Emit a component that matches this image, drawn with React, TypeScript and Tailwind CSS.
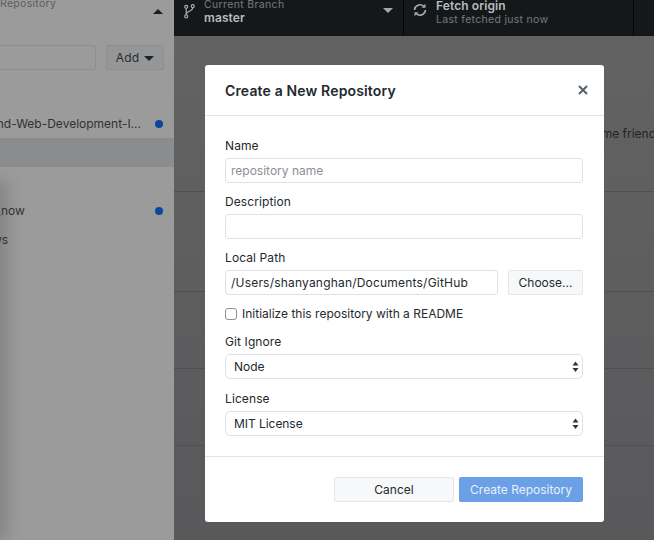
import React from "react";

const Chevron = ({ className }: { className?: string }) => (
  <svg width="10" height="5" viewBox="0 0 10 5" className={className}>
    <path d="M0 0h10L5 5z" fill="currentColor" />
  </svg>
);

const Field = ({ label, children, className = "" }: { label: string; children: React.ReactNode; className?: string }) => (
  <div className={className}>
    <div className="mb-[4px] h-[18px] pt-px text-[12px] leading-[17px] tracking-[0.1px] text-[#24292e]">{label}</div>
    {children}
  </div>
);

const SelectBox = ({ value }: { value: string }) => (
  <div className="relative h-[25px] w-full rounded-[5px] border border-[#dfe1e4] bg-white pl-[8px] text-[12px] leading-[23px] tracking-[-0.05px] text-[#24292e]">
    {value}
    <svg width="7" height="12" viewBox="0 0 7 12" className="absolute right-[3px] top-[6px] text-[#30353a]">
      <path d="M3.5 0.5L6.5 4.5H0.5z M3.5 11L0.5 7H6.5z" fill="currentColor" />
    </svg>
  </div>
);

export default function App() {
  return (
    <div className="relative flex h-[540px] w-[654px] overflow-hidden bg-[#5d5d5f] font-['Inter','Liberation_Sans',sans-serif]">
      <aside className="relative flex h-full w-[174px] shrink-0 flex-col overflow-hidden bg-[#9b9b9b] text-[#2f3133]">
        <div className="absolute -left-[16px] bottom-0 top-[180px] w-[24px] bg-[#858585] blur-[7px]" />
        <div className="flex h-[36px] items-start justify-between pr-[11px]">
          <span className="-mt-[3px] text-[10.5px] leading-[14px] tracking-[0.3px] text-[#5c5e60]">Repository</span>
          <Chevron className="mt-[9px] rotate-180 text-[#1d1f21]" />
        </div>
        <div className="mt-[9px] flex h-[25px] justify-between pr-[10px]">
          <div className="h-[25px] w-[96px] rounded-r-[3px] border border-l-0 border-[#8d8e8f] bg-[#9b9b9b]" />
          <div className="flex w-[58px] items-center justify-center gap-[5px] rounded-[2px] border border-[#8d8e8f] bg-[#959697] text-[12px] tracking-[0.1px] text-[#2a2c2e]">
            Add
            <Chevron className="mt-[1px] text-[#1f2123]" />
          </div>
        </div>
        <div className="mt-[40px] flex h-[28px] items-center justify-end overflow-hidden pr-[11px]">
          <span className="whitespace-nowrap text-[12px]">nd-Web-Development-I...</span>
          <span className="ml-[14px] size-[8px] shrink-0 rounded-full bg-[#0b479b]" />
        </div>
        <div className="h-[29px] bg-[#8b8c8d]" />
        <div className="relative mt-[30px] flex h-[28px] items-center justify-between pr-[11px]">
          <span className="-ml-[5px] text-[12px]">_now</span>
          <span className="size-[8px] rounded-full bg-[#0b479b]" />
        </div>
        <div className="relative -ml-[8px] h-[29px] text-[12px] leading-[29px]">ws</div>
      </aside>

      <main className="flex min-w-0 flex-1 flex-col bg-gradient-to-b from-[#636364] to-[#59595b]">
        <header className="flex h-[36px] shrink-0 overflow-hidden bg-[#15181b]">
          <div className="flex w-[230px] shrink-0 items-center border-r border-[#050607] pl-[10px] pr-[10px]">
            <svg width="11" height="15" viewBox="0 0 11 15" className="mb-[14px] shrink-0 text-[#a8aaac]" fill="none" stroke="currentColor" strokeWidth="1.2">
              <circle cx="2.2" cy="2.8" r="1.5" />
              <circle cx="2.2" cy="12.4" r="1.5" />
              <circle cx="8.8" cy="2.2" r="1.5" />
              <path d="M2.2 4.4v6.4M8.8 3.8c0 3.8-6.6 3-6.6 6.6" />
            </svg>
            <div className="ml-[9px] -mt-[15px] flex-1">
              <div className="text-[10.5px] leading-[13px] tracking-[0.35px] text-[#767a7e]">Current Branch</div>
              <div className="text-[12px] font-semibold leading-[13px] tracking-[0.1px] text-[#b9bbbd]">master</div>
            </div>
            <Chevron className="mb-[15px] text-[#a5a7a9]" />
          </div>
          <div className="flex w-[230px] shrink-0 items-center border-r border-[#050607] pl-[9px]">
            <svg width="14" height="14" viewBox="0 0 14 14" className="mb-[17px] shrink-0 text-[#a8aaac]" fill="none" stroke="currentColor" strokeWidth="1.6">
              <path d="M1.5 7a5.5 5.5 0 0 1 9.2-3.7" />
              <path d="M12.5 7a5.5 5.5 0 0 1-9.2 3.7" />
              <path d="M12.5 0.8v4h-4z M1.5 13.2v-4h4z" fill="currentColor" stroke="none" />
            </svg>
            <div className="ml-[9px] -mt-[11px]">
              <div className="text-[12px] font-semibold leading-[13px] tracking-[0.1px] text-[#b9bbbd]">Fetch origin</div>
              <div className="mt-[1px] text-[10.5px] leading-[13px] tracking-[0.3px] text-[#767a7e]">Last fetched just now</div>
            </div>
          </div>
        </header>
        <div className="flex flex-1 flex-col overflow-hidden">
          <div className="flex h-[156px] shrink-0 flex-col items-end border-b border-[#505052] pt-[89px] text-[12px] leading-[17px] text-[#212325]">
            <span className="-mr-[2px] whitespace-nowrap">me friend</span>
          </div>
          <div className="h-[100px] shrink-0 border-b border-[#505052]" />
          <div className="h-[77px] shrink-0 border-b border-[#505052]" />
          <div className="h-[77px] shrink-0 border-b border-[#505052]" />
        </div>
      </main>

      {/* modal overlay */}
      <div className="absolute left-[205px] top-[65px] flex h-[457px] w-[399px] flex-col overflow-hidden rounded-[3px] bg-white">
        <div className="flex h-[51px] shrink-0 items-center justify-between border-b border-[#e1e4e8] pl-[20px] pr-[16px]">
          <h2 className="text-[14px] font-semibold tracking-[0.15px] text-[#24292e]">Create a New Repository</h2>
          <svg width="10" height="10" viewBox="0 0 10 10" className="text-[#586069]" fill="none" stroke="currentColor" strokeWidth="2">
            <path d="M1 1l8 8M9 1l-8 8" />
          </svg>
        </div>
        <div className="flex h-[341px] shrink-0 flex-col border-b border-[#e1e4e8] pl-[20px] pr-[21px] pt-[20px]">
          <Field label="Name">
            <input
              readOnly
              placeholder="repository name"
              className="block h-[25px] w-full rounded-[3px] border border-[#dfe1e4] px-[5px] text-[12px] text-[#24292e] outline-none placeholder:text-[#8b9096]"
            />
          </Field>
          <Field label="Description" className="mt-[9px]">
            <input readOnly className="block h-[25px] w-full rounded-[3px] border border-[#dfe1e4] px-[5px] text-[12px] outline-none" />
          </Field>
          <Field label="Local Path" className="mt-[9px]">
            <div className="flex justify-between">
              <input
                readOnly
                value="/Users/shanyanghan/Documents/GitHub"
                className="block h-[25px] w-[273px] rounded-[3px] border border-[#dfe1e4] px-[5px] text-[12px] tracking-[0.2px] text-[#24292e] outline-none"
              />
              <div className="flex h-[25px] w-[75px] items-center justify-center rounded-[2px] border border-[#e4e6e9] bg-[#f6f8fa] text-[12px] text-[#24292e]">
                Choose...
              </div>
            </div>
          </Field>
          <label className="mt-[10px] flex h-[17px] items-center text-[12px] text-[#24292e]">
            <span className="size-[12px] shrink-0 rounded-[3px] border border-[#8d9196] bg-white" />
            <span className="ml-[5px]">Initialize this repository with a README</span>
          </label>
          <Field label="Git Ignore" className="mt-[10px]">
            <SelectBox value="Node" />
          </Field>
          <Field label="License" className="mt-[10px]">
            <SelectBox value="MIT License" />
          </Field>
        </div>
        <div className="flex flex-1 items-start justify-end gap-[5px] pr-[21px] pt-[20px]">
          <button className="h-[25px] w-[120px] rounded-[2px] border border-[#e4e6e9] bg-[#f6f8fa] text-[12px] text-[#24292e]">Cancel</button>
          <button className="h-[25px] w-[124px] rounded-[2px] bg-[#6ba0e6] text-[12px] text-[#e8f0fb]">Create Repository</button>
        </div>
      </div>
    </div>
  );
}
